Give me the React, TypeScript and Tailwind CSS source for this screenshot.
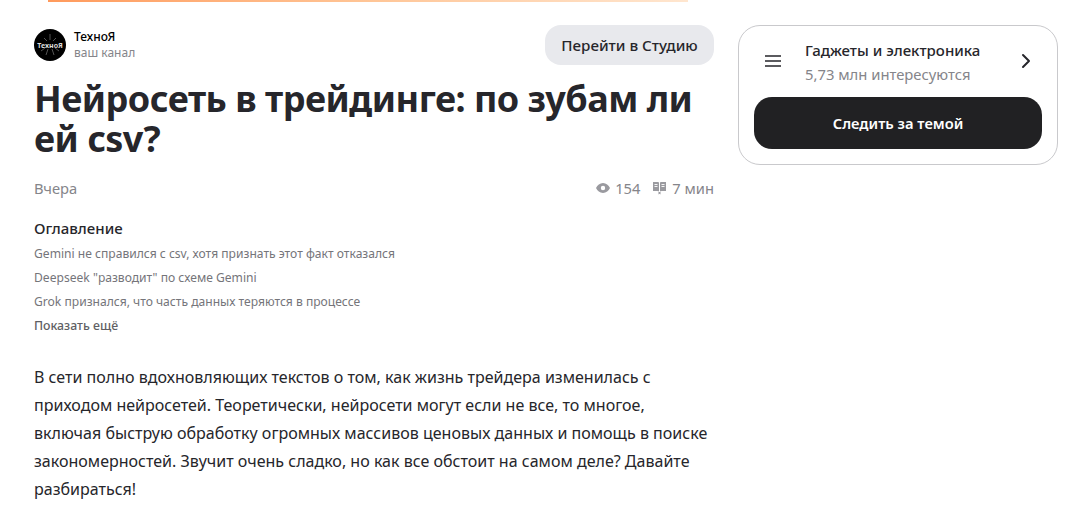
import { ChevronRight } from 'lucide-react'

const toc = [
  'Gemini не справился с csv, хотя признать этот факт отказался',
  'Deepseek "разводит" по схеме Gemini',
  'Grok признался, что часть данных теряются в процессе',
]

function Avatar() {
  return (
    <div className="relative flex h-8 w-8 shrink-0 items-center justify-center overflow-hidden rounded-full bg-black">
      <svg className="absolute inset-0" width="32" height="32" viewBox="0 0 32 32" fill="none" stroke="#777" strokeWidth="0.7">
        <path d="M10 9l3 3M22 9l-3 3M16 5v6M7 22l4-3M25 22l-4-3M12 26l2-6M20 26l-2-6" />
      </svg>
      <span className="relative text-[7px] font-bold leading-none text-[#ddd]">ТехноЯ</span>
    </div>
  )
}

function EyeIcon() {
  return (
    <svg width="14" height="10" viewBox="0 0 14 10">
      <path fill="#9a9a9f" fillRule="evenodd" d="M7 0c3.2 0 5.6 2.3 7 5-1.4 2.7-3.8 5-7 5S1.4 7.700 0 5c1.400-2.700 3.800-5 7-5zm0 2.800a2.200 2.200 0 100 4.400 2.200 2.200 0 000-4.400z" />
    </svg>
  )
}

function BookIcon() {
  return (
    <svg width="15" height="14" viewBox="0 0 15 14">
      <path fill="#9a9a9f" d="M1 1h4.500c.9 0 1.600.3 1.500 1v8.500c-.4-.4-1-.6-1.700-.6H1zM14 1H9.500C8.600 1 7.900 1.300 8 2v8.500c.4-.4 1-.6 1.700-.6H14zM6.500 11h2v2.500l-1-.7-1 .7z" />
      <path stroke="#fff" strokeWidth="0.9" d="M2.500 3.500h3M2.500 5.500h3M9.500 3.500h3M9.500 5.500h3" />
    </svg>
  )
}

export default function App() {
  return (
    <div className="relative h-[519px] w-[1086px] overflow-hidden bg-white font-['Noto_Sans',sans-serif] text-[#26262b]">
      <div className="absolute left-[48px] top-0 h-[2px] w-[640px] bg-gradient-to-r from-[#ff9a5c] via-[#ffc596] to-[#ffe6cf]" />

      <div className="flex items-start gap-6 pl-[34px] pt-[25px]">
        <main className="w-[680px]">
          <div className="flex items-start justify-between">
            <div className="flex items-center gap-2 pt-1">
              <Avatar />
              <div>
                <div className="text-xs font-medium leading-4 text-black">ТехноЯ</div>
                <div className="text-xs leading-4 text-[#85858a]">ваш канал</div>
              </div>
            </div>
            <button className="h-10 w-[169px] rounded-2xl bg-[#e8e9ed] text-[15.200px] font-medium text-[#26262b]">
              Перейти в Студию
            </button>
          </div>

          <h1 className="mt-[14px] text-[36px] font-bold leading-[40px] tracking-[-0.5px] text-[#26262b]">
            Нейросеть в трейдинге: по зубам ли ей csv?
          </h1>

          <div className="mt-[19px] flex items-center justify-between text-[14.700px] leading-5 text-[#85858a]">
            <span>Вчера</span>
            <div className="flex items-center gap-3">
              <span className="flex items-center gap-[5px]">
                <EyeIcon />
                154
              </span>
              <span className="flex items-center gap-[5px]">
                <BookIcon />
                7 мин
              </span>
            </div>
          </div>

          <section className="mt-[20px]">
            <h2 className="text-[15px] font-medium leading-5 text-[#26262b]">Оглавление</h2>
            <ul className="mt-[4px]">
              {toc.map((item) => (
                <li key={item} className="text-[12.100px] leading-6 text-[#75757a]">
                  {item}
                </li>
              ))}
            </ul>
            <div className="text-[12.300px] font-medium leading-6 text-[#5f5f64]">Показать ещё</div>
          </section>

          <p className="mt-[25px] text-[16.050px] leading-7 text-[#26262b]">
            В сети полно вдохновляющих текстов о том, как жизнь трейдера изменилась с приходом нейросетей.
            Теоретически, нейросети могут если не все, то многое, включая быструю обработку огромных массивов
            ценовых данных и помощь в поиске закономерностей. Звучит очень сладко, но как все обстоит на самом
            деле? Давайте разбираться!
          </p>
        </main>

        <aside className="w-[320px] rounded-[22px] border border-[#c9c9cc] px-[15px] pb-[15px] pt-[12px]">
          <div className="flex items-center">
            <svg className="mb-[2px] ml-[10px]" width="18" height="12" viewBox="0 0 18 12" stroke="#26262b" strokeWidth="1.600">
              <path d="M1 1h16M1 6h16M1 11h16" />
            </svg>
            <div className="ml-[23px] flex-1">
              <div className="text-[15px] font-medium leading-6 text-[#26262b]">Гаджеты и электроника</div>
              <div className="text-[14.800px] leading-6 text-[#85858a]">5,73 млн интересуются</div>
            </div>
            <ChevronRight className="mb-[2px] mr-[4px] text-[#26262b]" size={24} strokeWidth={2} />
          </div>
          <button className="mt-[11px] h-[52px] w-full rounded-[18px] bg-[#212123] text-[14.700px] font-semibold text-white">
            Следить за темой
          </button>
        </aside>
      </div>
    </div>
  )
}
